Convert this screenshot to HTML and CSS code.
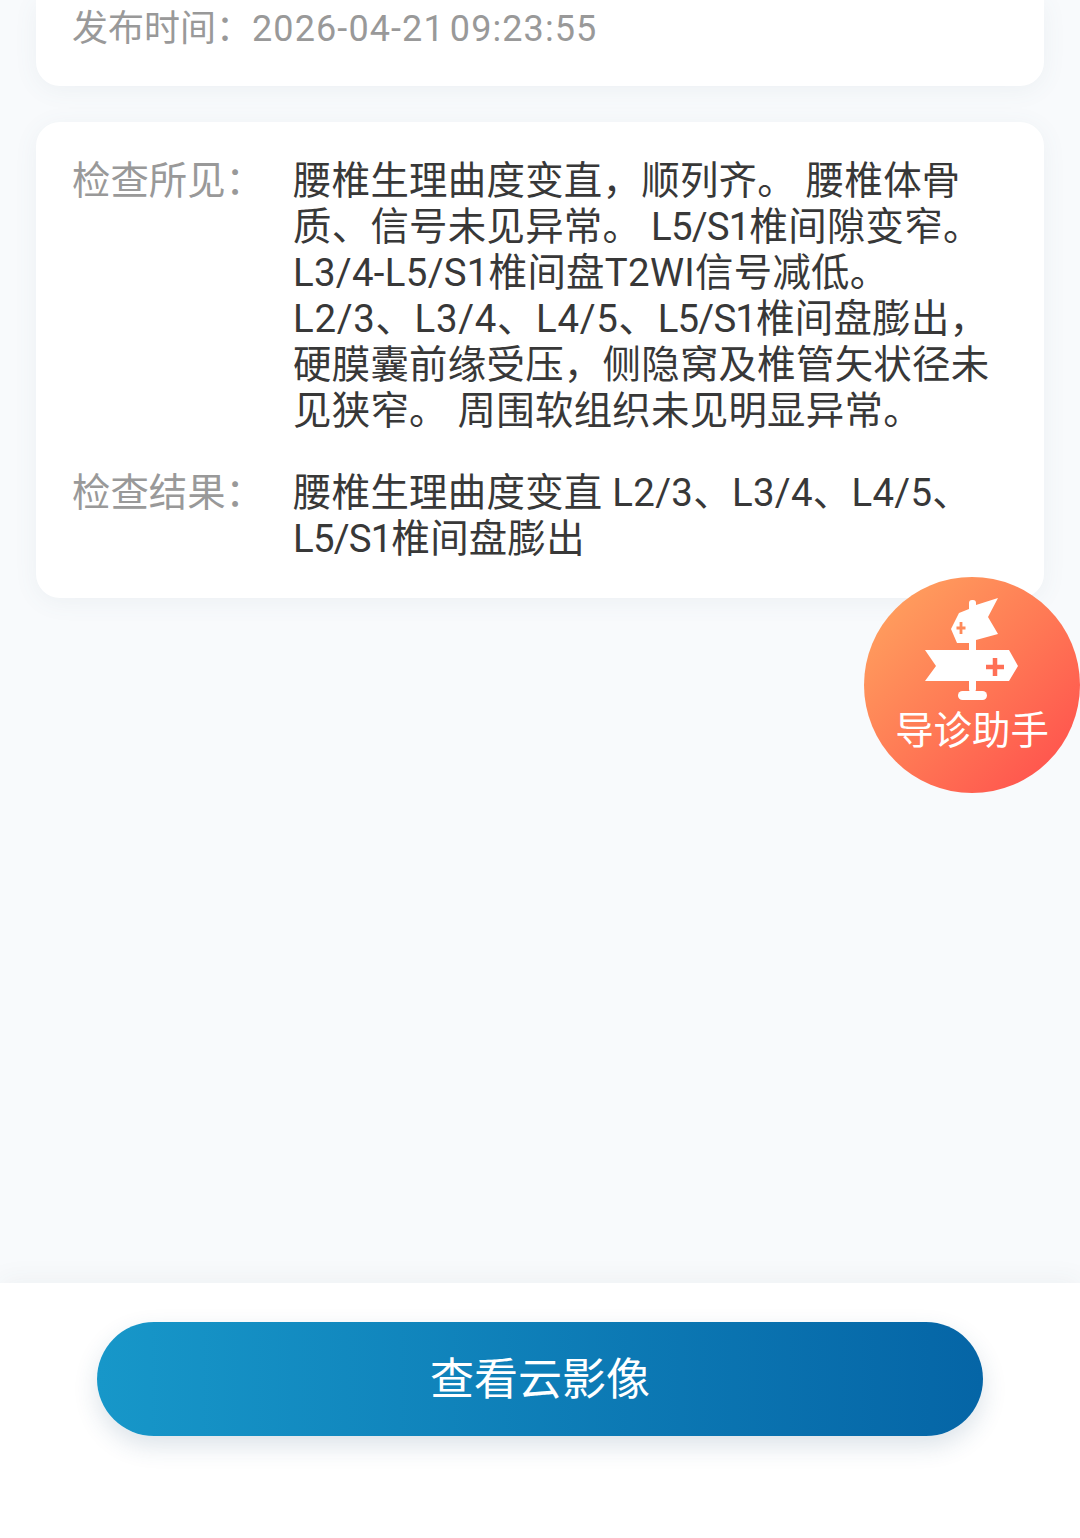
FILE: index.html
```html
<!DOCTYPE html>
<html lang="zh-CN">
<head>
<meta charset="utf-8">
<title>检查报告</title>
<link rel="stylesheet" href="styles.css">
</head>
<body>
<main class="content">
  <section class="card card-top">
    <p class="meta">发布时间：<span class="date">2026-04-21 09:23:55</span></p>
  </section>
  <section class="card card-body">
    <div class="row">
      <div class="label">检查所见：</div>
      <div class="value">腰椎生理曲度变直，顺列齐。 腰椎体骨<br>质、信号未见异常。 <span class="tight">L5/S1</span>椎间隙变窄。<br>L3/4-L5/S1椎间盘T2WI信号减低。<br><span class="wide">L2/3、L3/4、L4/5、</span><span class="tight">L5/S1</span>椎间盘膨出，<br>硬膜囊前缘受压，侧隐窝及椎管矢状径未<br>见狭窄。 周围软组织未见明显异常。</div>
    </div>
    <div class="row">
      <div class="label">检查结果：</div>
      <div class="value">腰椎生理曲度变直 L2/3、L3/4、L4/5、<br><span class="tight">L5/S1</span>椎间盘膨出</div>
    </div>
  </section>
</main>
<a class="guide">
  <svg class="guide-icon" viewBox="0 0 216 126" aria-hidden="true">
    <rect x="105" y="23" width="7" height="92" rx="3" fill="#fff"/>
    <path d="M112 28L134 21L124 40L134 57L112 63V72H105V66L93 66L87 52L95 36L105 32Z" fill="#fff"/>
    <path d="M61 73H145L154 89L145 104H61L72 89Z" fill="#fff"/>
    <rect x="94" y="114" width="29" height="9" rx="4.500" fill="#fff"/>
    <path d="M97 45v12M92.500 51h9" stroke="#ff8a5a" stroke-width="2.800" fill="none"/>
    <path d="M131 81v18M122 90h18" stroke="#ff7056" stroke-width="4.500" fill="none"/>
  </svg>
  <span class="guide-text">导诊助手</span>
</a>
<footer class="bottom">
  <button class="primary" type="button">查看云影像</button>
</footer>
</body>
</html>
```
FILE: styles.css
```css
* { box-sizing: border-box; }
html, body { height: 100%; }
body {
  margin: 0;
  height: 1538px;
  overflow: hidden;
  display: flex;
  flex-direction: column;
  background: #f8fafc;
  font-family: Roboto, "Noto Sans CJK SC", sans-serif;
  position: relative;
}
.content {
  flex: 1;
  padding: 0 36px;
}
.card {
  background: #fff;
  border-radius: 24px;
  box-shadow: 0 4px 24px rgba(90, 110, 130, 0.07);
}
.card-top {
  height: 86px;
  border-radius: 0 0 24px 24px;
  padding: 0 36px;
}
.meta {
  margin: 0;
  font-size: 36px;
  line-height: 58px;
  color: #999;
}
.date {
  letter-spacing: 1.100px;
  word-spacing: -5px;
}
.card-body {
  margin-top: 36px;
  padding: 36px;
  display: flex;
  flex-direction: column;
  gap: 36px;
}
.row { display: flex; }
.label {
  flex: 0 0 221px;
  font-size: 38.400px;
  line-height: 46px;
  color: #999;
}
.value {
  flex: 1;
  font-size: 38.400px;
  line-height: 46px;
  letter-spacing: 0.300px;
  color: #383838;
  white-space: nowrap;
}
.tight { letter-spacing: -0.800px; }
.wide { letter-spacing: 0.700px; }
.guide {
  position: absolute;
  left: 864px;
  top: 577px;
  width: 216px;
  height: 216px;
  border-radius: 50%;
  background: linear-gradient(135deg, #ffa860 0%, #ff7a55 50%, #ff4a4c 100%);
  display: flex;
  flex-direction: column;
  align-items: center;
}
.guide-icon {
  width: 216px;
  height: 126px;
  flex: none;
}
.guide-text {
  font-size: 38.400px;
  line-height: 46px;
  color: #fff;
  margin-top: 5px;
}
.bottom {
  height: 255px;
  flex: none;
  background: #fff;
  padding-top: 39px;
  display: flex;
  justify-content: center;
  align-items: flex-start;
  box-shadow: 0 -4px 24px rgba(60, 70, 80, 0.05);
}
.primary {
  width: 886px;
  height: 114px;
  border: 0;
  border-radius: 57px;
  background: linear-gradient(90deg, #1797c9 0%, #0565a6 100%);
  box-shadow: 0 10px 24px rgba(40, 80, 120, 0.16);
  color: #fff;
  font-family: inherit;
  font-size: 44px;
  line-height: 116px;
  padding: 0;
}
```
